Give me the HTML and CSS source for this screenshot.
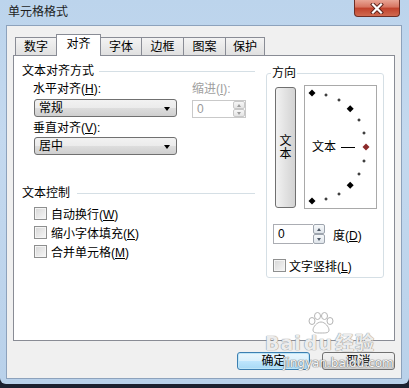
FILE: index.html
```html
<!DOCTYPE html>
<html lang="zh-CN">
<head>
    <meta charset="UTF-8">
    <meta name="viewport" content="width=device-width, initial-scale=1.0">
    <title>单元格格式</title>
    <link rel="stylesheet" href="styles.css">
</head>
<body>
    <div class="window">
        <div class="titlebar">
            <span class="title">单元格格式</span>
            <button class="close-btn" aria-label="关闭">
                <svg width="14" height="11" viewBox="0 0 14 11">
                    <path d="M3 1.5 L11 9.5 M11 1.5 L3 9.5" stroke="#5a2119" stroke-width="4" stroke-linecap="square"/>
                    <path d="M3 1.5 L11 9.5 M11 1.5 L3 9.5" stroke="#fff" stroke-width="2.2" stroke-linecap="square"/>
                </svg>
            </button>
        </div>

        <div class="client">
            <div class="tabs">
                <div class="tab w42">数字</div>
                <div class="tab w45 active">对齐</div>
                <div class="tab w42">字体</div>
                <div class="tab w43">边框</div>
                <div class="tab w43">图案</div>
                <div class="tab w40">保护</div>
            </div>

            <div class="panel">
                <div class="left-col">
                    <div class="section-title">文本对齐方式</div>
                    <div class="align-grid">
                        <div class="field">
                            <label>水平对齐(<u>H</u>):</label>
                            <div class="combo">常规</div>
                            <label class="next">垂直对齐(<u>V</u>):</label>
                            <div class="combo combo-low">居中</div>
                        </div>
                        <div class="field disabled">
                            <label>缩进(<u>I</u>):</label>
                            <div class="spin">
                                <span class="spin-value">0</span>
                                <span class="spin-btns"><i class="up"></i><i class="down"></i></span>
                            </div>
                        </div>
                    </div>

                    <div class="section-title second">文本控制</div>
                    <ul class="checks">
                        <li><span class="cbox"></span><span>自动换行(<u>W</u>)</span></li>
                        <li><span class="cbox"></span><span>缩小字体填充(<u>K</u>)</span></li>
                        <li><span class="cbox"></span><span>合并单元格(<u>M</u>)</span></li>
                    </ul>
                </div>

                <fieldset class="orient">
                    <legend>方向</legend>
                    <div class="dial-row">
                        <div class="vtext-btn">文<br>本</div>
                        <div class="dial">
                            <svg width="71" height="122" viewBox="0 0 71 122">
                                <g fill="#000">
                                    <polygon points="7,3.5 10.5,7 7,10.5 3.5,7"/>
                                    <polygon points="45.2,19.3 48.7,22.8 45.2,26.3 41.7,22.8"/>
                                    <polygon points="45.2,95.7 48.7,99.2 45.2,102.7 41.7,99.2"/>
                                    <polygon points="7,111.5 10.5,115 7,118.5 3.5,115"/>
                                </g>
                                <polygon points="61,57.5 64.5,61 61,64.5 57.5,61" fill="#8b2a2a"/>
                                <g stroke="#000" stroke-width="1">
                                    <path d="M19.5 9h3M21 7.5v3"/>
                                    <path d="M32.5 14h3M34 12.5v3"/>
                                    <path d="M52.5 34h3M54 32.5v3"/>
                                    <path d="M57.5 47h3M59 45.5v3"/>
                                    <path d="M57.5 75h3M59 73.5v3"/>
                                    <path d="M52.5 88h3M54 86.5v3"/>
                                    <path d="M32.5 108h3M34 106.5v3"/>
                                    <path d="M19.5 113h3M21 111.5v3"/>
                                    <path d="M36 61.5h14"/>
                                </g>
                            </svg>
                            <span class="dial-text">文本</span>
                        </div>
                    </div>
                    <div class="degree-row">
                        <span class="deg-input">0</span>
                        <span class="spin-btns tall"><i class="up"></i><i class="down"></i></span>
                        <label class="deg-label">度(<u>D</u>)</label>
                    </div>
                    <div class="check-row">
                        <span class="cbox"></span><span>文字竖排(<u>L</u>)</span>
                    </div>
                </fieldset>
            </div>

            <div class="actions">
                <button class="btn default">确定</button>
                <button class="btn">取消</button>
            </div>
        </div>

        <div class="watermark" aria-hidden="true">
            <svg class="paw" width="28" height="22" viewBox="0 0 28 22">
                <g fill="rgba(255,255,255,0.8)" stroke="#b4b4b4" stroke-width="1">
                    <ellipse cx="5" cy="9" rx="3" ry="3.5"/>
                    <ellipse cx="10.5" cy="4" rx="3" ry="3.5"/>
                    <ellipse cx="17.5" cy="4" rx="3" ry="3.5"/>
                    <ellipse cx="23" cy="9" rx="3" ry="3.5"/>
                    <path d="M14 10c-4 0-8 5-8 8s3 3 8 3 8 0 8-3-4-8-8-8z"/>
                </g>
            </svg>
            <div class="wm-logo">Bai<span class="wm-du">du</span>经验</div>
            <div class="wm-url">jingyan.baidu.com</div>
        </div>
    </div>
</body>
</html>
```

FILE: styles.css
```css
:root {
    --tab-border: #898c95;
    --line-color: #d5dfe5;
    --ctrl-border: #707070;
    --ctrl-bg: linear-gradient(#f2f2f2 0%, #ebebeb 50%, #dddddd 51%, #cfcfcf 100%);
    --disabled-text: #a0a0a0;
}

* {
    box-sizing: border-box;
}

body {
    margin: 0;
    background-color: #1c2130;
    font-family: "Liberation Sans", "Noto Sans CJK SC", sans-serif;
    font-size: 12px;
    color: #000;
}

u {
    text-decoration: underline;
    text-underline-offset: 1px;
}

.window {
    position: relative;
    width: 409px;
    height: 384px;
    background: linear-gradient(180deg, #bcd4ec 0%, #c4d9ef 35%, #b9d1ea 100%);
    border-radius: 0 0 6px 6px;
    overflow: hidden;
}

/* Title bar */
.titlebar {
    height: 25px;
    display: flex;
    justify-content: space-between;
    align-items: flex-start;
    padding-left: 8px;
}

.title {
    line-height: 24px;
    color: #1e1e1e;
}

.close-btn {
    width: 46px;
    height: 17px;
    margin-right: 9px;
    padding: 0;
    border: 1px solid #6d2e25;
    border-top: none;
    border-radius: 0 0 4px 4px;
    background: linear-gradient(#e9a595 0%, #d7735f 45%, #c0412b 50%, #d06a50 100%);
    display: flex;
    align-items: center;
    justify-content: center;
}

/* Client area */
.client {
    margin: 0 7px 0 6px;
    height: 354px;
    background-color: #f0f0f0;
    border: 1px solid #8da2bc;
    padding: 0 6px;
}

.tabs {
    display: flex;
    align-items: flex-end;
    height: 21px;
    margin: 8px 0 0 2px;
}

.tab {
    height: 18px;
    border: 1px solid var(--tab-border);
    border-bottom: none;
    background: linear-gradient(#f3f3f3, #e0e0e0);
    margin-right: -1px;
    text-align: center;
    line-height: 18px;
}

.tab.active {
    height: 22px;
    margin-bottom: -1px;
    background: #fff;
    line-height: 19px;
    position: relative;
    z-index: 1;
}

.w40 { width: 40px; }
.w42 { width: 42px; }
.w43 { width: 43px; }
.w45 { width: 45px; }

.panel {
    display: flex;
    align-items: flex-start;
    gap: 11px;
    width: 382px;
    height: 286px;
    border: 1px solid var(--tab-border);
    background: #fff;
    padding: 8px 10px 0 8px;
}

/* Left column */
.left-col {
    width: 233px;
}

.section-title {
    display: flex;
    align-items: center;
    gap: 5px;
    height: 14px;
    line-height: 14px;
}

.section-title::after {
    content: '';
    flex: 1;
    height: 1px;
    margin-top: 1px;
    background-color: var(--line-color);
}

.section-title.second {
    margin-top: 31px;
    gap: 7px;
}

.align-grid {
    display: grid;
    grid-template-columns: 144px 54px;
    column-gap: 15px;
    margin: 4px 0 0 11px;
}

.field label {
    display: block;
    line-height: 14px;
}

.field label.next {
    margin-top: 4px;
}

.disabled {
    color: var(--disabled-text);
}

.combo {
    display: flex;
    align-items: center;
    justify-content: space-between;
    width: 143px;
    height: 18px;
    margin: 3px 0 0 1px;
    padding: 0 6px 0 4px;
    border: 1px solid var(--ctrl-border);
    border-radius: 3px;
    background: var(--ctrl-bg);
    line-height: 16px;
}

.combo-low {
    margin-top: 2px;
}

.combo::after {
    content: '';
    border-left: 3.5px solid transparent;
    border-right: 3.5px solid transparent;
    border-top: 4px solid #000;
    margin-top: 2px;
}

.spin {
    display: flex;
    width: 54px;
    height: 18px;
    margin-top: 4px;
    border: 1px solid #c9c9c9;
    background: #fff;
}

.spin-value {
    flex: 1;
    padding-left: 4px;
    line-height: 16px;
    color: #9a9a9a;
}

.spin-btns {
    display: flex;
    flex-direction: column;
    width: 12px;
}

.spin-btns i {
    flex: 1;
    display: flex;
    align-items: center;
    justify-content: center;
    border: 1px solid #c8c8c8;
    border-radius: 2px;
    background: linear-gradient(#f7f7f7, #e4e4e4);
}

.spin-btns i::after {
    content: '';
    border-left: 2.5px solid transparent;
    border-right: 2.5px solid transparent;
}

.spin-btns .up::after {
    border-bottom: 3px solid #9c9c9c;
}

.spin-btns .down::after {
    border-top: 3px solid #9c9c9c;
}

.spin-btns.tall {
    height: 20px;
}

.spin-btns.tall i {
    border-color: #9da4ad;
    background: linear-gradient(#f6f8fa, #dfe4ea);
}

.spin-btns.tall .up::after {
    border-bottom-color: #4d5866;
}

.spin-btns.tall .down::after {
    border-top-color: #4d5866;
}

.checks {
    list-style: none;
    margin: 4px 0 0 12px;
    padding: 0;
}

.checks li {
    display: flex;
    align-items: center;
    gap: 4px;
    height: 19px;
}

.cbox {
    width: 13px;
    height: 13px;
    border: 1px solid #8e8f8f;
    background: linear-gradient(135deg, #d6d6d6, #f7f7f7);
    box-shadow: inset 0 0 0 1px #f4f4f4;
}

/* Orientation group */
.orient {
    width: 118px;
    margin: 2px 0 0;
    padding: 0 6px 3px 8px;
    border: 1px solid var(--line-color);
    border-radius: 3px;
    min-width: 0;
}

.orient legend {
    padding: 0 1px;
    margin-left: -4px;
    line-height: 14px;
}

.dial-row {
    display: flex;
    align-items: flex-start;
    margin-top: 5px;
}

.vtext-btn {
    display: flex;
    align-items: center;
    justify-content: center;
    text-align: center;
    width: 22px;
    height: 121px;
    margin-top: 2px;
    border: 1px solid var(--ctrl-border);
    border-radius: 3px;
    background: linear-gradient(90deg, #f2f2f2, #e2e2e2 50%, #d3d3d3);
    line-height: 13px;
}

.dial {
    position: relative;
    width: 73px;
    height: 124px;
    margin-left: 8px;
    border: 1px solid #a9a9a9;
    background: #fff;
}

.dial svg {
    display: block;
}

.dial-text {
    position: absolute;
    left: 7px;
    top: 54px;
    line-height: 14px;
}

.degree-row {
    display: flex;
    align-items: center;
    height: 20px;
    margin: 15px 0 0 -2px;
}

.deg-input {
    width: 40px;
    height: 20px;
    padding-left: 4px;
    border: 1px solid #abadb3;
    border-right: none;
    background: #fff;
    line-height: 18px;
}

.deg-label {
    margin-left: 8px;
}

.check-row {
    display: flex;
    align-items: center;
    gap: 3px;
    height: 18px;
    margin: 12px 0 0 -2px;
}

/* Buttons */
.actions {
    display: flex;
    justify-content: flex-end;
    gap: 12px;
    margin-top: 11px;
}

.btn {
    width: 73px;
    height: 18px;
    padding: 0;
    border: 1px solid var(--ctrl-border);
    border-radius: 3px;
    background: var(--ctrl-bg);
    font: inherit;
    line-height: 16px;
    color: #000;
}

.btn.default {
    border-color: #3c7fb1;
    background: linear-gradient(#eaf6fd 0%, #d9f0fc 50%, #bee6fd 51%, #a7d9f5 100%);
    box-shadow: inset 0 0 0 1px #bfe6f8;
}

/* Watermark */
.watermark {
    position: absolute;
    left: 265px;
    top: 312px;
    width: 124px;
    color: rgba(255, 255, 255, 0.85);
    text-shadow: 0 0 1px #8a8a8a, 0 0 1px #8a8a8a;
    pointer-events: none;
}

.paw {
    display: block;
    margin-left: 42px;
}

.wm-logo {
    font-size: 19px;
    font-weight: bold;
    line-height: 18px;
    letter-spacing: 1px;
    font-family: "DejaVu Sans", "Noto Sans CJK SC", sans-serif;
}

.wm-du {
    margin: 0 2px;
}

.wm-url {
    margin: 4px 0 0 18px;
    font-size: 12px;
    line-height: 14px;
    font-family: "DejaVu Sans", sans-serif;
    color: #f6f6f6;
    text-shadow: 0 0 1px #777, 0 0 1px #777, 0 0 1px #777;
}
```
